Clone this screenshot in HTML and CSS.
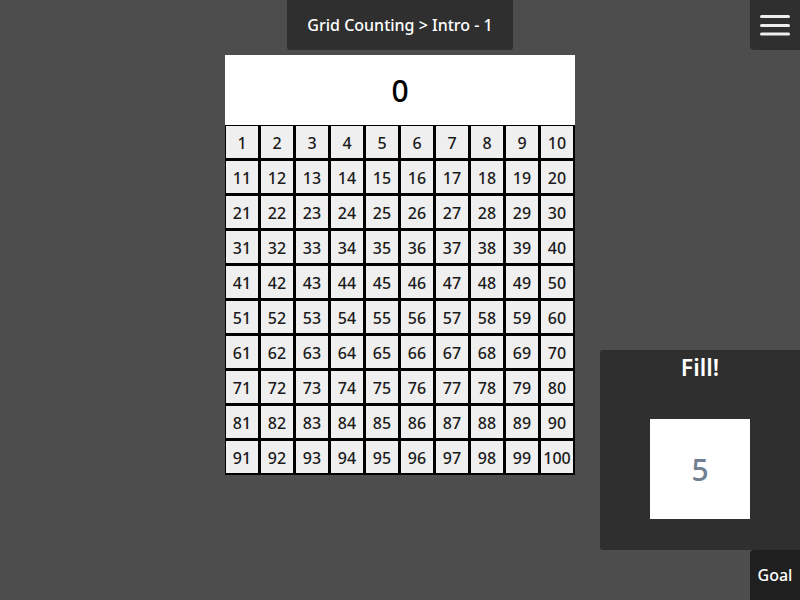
FILE: index.html
```
<!DOCTYPE html>
<html>
<head>
<meta charset="utf-8">
<link rel="stylesheet" href="styles.css">
</head>
<body>
<div class="left"></div>
<div class="center">
  <div class="title">Grid Counting &gt; Intro - 1</div>
  <div class="board">
    <div class="counter">0</div>
    <div class="grid" id="grid"></div>
  </div>
</div>
<div class="right">
  <div class="menu">
    <svg width="30" height="22" viewBox="0 0 30 22"><g stroke="#eeeeee" stroke-width="3" stroke-linecap="round"><line x1="1.5" y1="2.5" x2="28.5" y2="2.5"/><line x1="1.5" y1="11.5" x2="28.5" y2="11.5"/><line x1="1.5" y1="20" x2="28.5" y2="20"/></g></svg>
  </div>
  <div class="spacer"></div>
  <div class="fill">
    <div class="fill-title">Fill!</div>
    <div class="target">5</div>
  </div>
  <div class="goal">Goal</div>
</div>
<script>
var g = document.getElementById('grid');
for (var i = 1; i <= 100; i++) {
  var c = document.createElement('div');
  c.className = 'cell';
  c.textContent = i;
  g.appendChild(c);
}
</script>
</body>
</html>
```
FILE: styles.css
```
html, body {
  margin: 0;
  padding: 0;
}
body {
  width: 800px;
  height: 600px;
  background: #4d4d4d;
  font-family: "Noto Sans", "Open Sans", sans-serif;
  font-weight: 500;
  display: grid;
  grid-template-columns: 225px 350px 225px;
  overflow: hidden;
}
.center {
  display: flex;
  flex-direction: column;
  align-items: center;
}
.title {
  width: 226px;
  height: 50px;
  background: #2f2f2f;
  color: #ffffff;
  font-size: 16px;
  display: flex;
  align-items: center;
  justify-content: center;
  border-radius: 0 0 3px 3px;
}
.board {
  margin-top: 5px;
  width: 350px;
}
.counter {
  height: 70px;
  background: #ffffff;
  color: #000000;
  font-size: 30px;
  display: flex;
  align-items: center;
  justify-content: center;
}
.grid {
  display: grid;
  grid-template-columns: repeat(10, 35px);
  grid-auto-rows: 35px;
}
.cell {
  box-sizing: border-box;
  border-style: solid;
  border-color: #000000;
  border-width: 1px 2px 2px 1px;
  background: #efefef;
  color: #1a1a1a;
  font-size: 16px;
  display: flex;
  align-items: center;
  justify-content: center;
  padding-top: 1px;
}
.right {
  display: flex;
  flex-direction: column;
  align-items: flex-end;
}
.menu {
  width: 50px;
  height: 50px;
  background: #2f2f2f;
  border-radius: 0 0 0 4px;
  display: flex;
  align-items: center;
  justify-content: center;
}
.spacer {
  flex: 1;
}
.fill {
  width: 200px;
  height: 200px;
  background: #2f2f2f;
  border-radius: 3px 0 0 3px;
  display: flex;
  flex-direction: column;
  align-items: center;
}
.fill-title {
  color: #ffffff;
  font-size: 23px;
  font-weight: 600;
  line-height: 32px;
  margin-top: 1px;
}
.target {
  margin-top: 36px;
  width: 100px;
  height: 100px;
  background: #ffffff;
  color: #708090;
  font-size: 30px;
  display: flex;
  align-items: center;
  justify-content: center;
}
.goal {
  width: 50px;
  height: 50px;
  background: #1f1f1f;
  color: #ffffff;
  font-size: 16px;
  border-radius: 4px 0 0 0;
  display: flex;
  align-items: center;
  justify-content: center;
}
```
